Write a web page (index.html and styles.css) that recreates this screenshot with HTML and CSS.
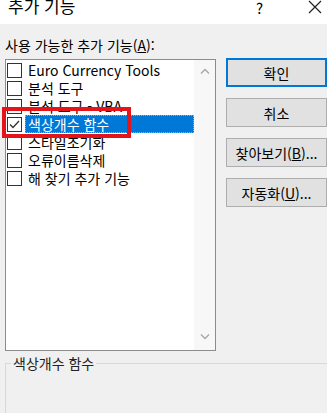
FILE: index.html
```html
<!DOCTYPE html>
<html lang="ko">
<head>
    <meta charset="UTF-8">
    <meta name="viewport" content="width=device-width, initial-scale=1.0">
    <link rel="stylesheet" href="styles.css">
</head>
<body>
    <div class="titlebar">
        <span class="title">추가 기능</span>
        <span class="help">?</span>
        <svg class="close" width="14" height="14" viewBox="0 0 14 14">
            <path d="M1 1 L13 13 M13 1 L1 13" stroke="#222" stroke-width="1.2" fill="none"/>
        </svg>
    </div>

    <div class="content">
        <div class="left">
            <div class="caption">사용 가능한 추가 기능(<u>A</u>):</div>
            <div class="listbox">
                <ul class="items">
                    <li><span class="check"></span><span class="text">Euro Currency Tools</span></li>
                    <li><span class="check"></span><span class="text">분석 도구</span></li>
                    <li><span class="check"></span><span class="text">분석 도구 - VBA</span></li>
                    <li class="selected">
                        <span class="check">
                            <svg width="13" height="13" viewBox="0 0 13 13">
                                <path d="M2 6.5 L5 9.5 L11 3" stroke="#333" stroke-width="1.3" fill="none"/>
                            </svg>
                        </span>
                        <span class="text">색상개수 함수</span>
                    </li>
                    <li><span class="check"></span><span class="text">스타일초기화</span></li>
                    <li><span class="check"></span><span class="text">오류이름삭제</span></li>
                    <li><span class="check"></span><span class="text">해 찾기 추가 기능</span></li>
                </ul>
                <div class="scroll">
                    <svg width="10" height="7" viewBox="0 0 10 7">
                        <path d="M1 5.5 L5 1.5 L9 5.5" stroke="#a6a6a6" stroke-width="1.3" fill="none"/>
                    </svg>
                    <svg width="10" height="7" viewBox="0 0 10 7">
                        <path d="M1 1.5 L5 5.5 L9 1.5" stroke="#a6a6a6" stroke-width="1.3" fill="none"/>
                    </svg>
                </div>
            </div>
        </div>

        <div class="buttons">
            <button class="default">확인</button>
            <button>취소</button>
            <button>찾아보기(<u>B</u>)...</button>
            <button>자동화(<u>U</u>)...</button>
        </div>
    </div>

    <fieldset class="desc">
        <legend>색상개수 함수</legend>
    </fieldset>

    <!-- highlight annotation over the checked item -->
    <div class="mark"></div>
</body>
</html>
```

FILE: styles.css
```css
body {
    margin: 0;
    background-color: #f0f0f0;
    font-family: "Noto Sans CJK KR", "Noto Sans", sans-serif;
    font-size: 14px;
    color: #000;
    overflow: hidden;
    height: 413px;
    position: relative;
}

.titlebar {
    height: 24px;
    background-color: #fff;
    display: flex;
    align-items: flex-start;
    overflow: hidden;
}

.title {
    font-size: 17px;
    line-height: 17px;
    margin: -3px 0 0 8px;
    flex: 1;
}

.help {
    font-size: 15px;
    line-height: 15px;
    margin-top: 0;
    width: 14px;
}

.close {
    margin: 0 5px 0 38px;
}

.content {
    display: flex;
    padding-left: 5px;
}

.left {
    padding-top: 11px;
}

.caption {
    line-height: 20px;
    margin-bottom: 4px;
}

.listbox {
    width: 209px;
    height: 290px;
    border: 1px solid #8c8c8c;
    background-color: #fff;
    display: flex;
}

.items {
    list-style: none;
    margin: 0;
    padding: 1px 0 0 0;
    flex: 1;
}

.items li {
    height: 18px;
    display: flex;
    align-items: center;
}

.check {
    width: 13px;
    height: 13px;
    border: 1px solid #333;
    margin-left: 1px;
    background-color: #fff;
    flex: none;
}

.check svg {
    display: block;
}

.text {
    margin-left: 3px;
    padding: 0 3px;
    line-height: 17px;
    white-space: nowrap;
}

.selected .text {
    flex: 1;
    background-color: #0078d7;
    color: #fff;
    border: 1px dotted #e8a040;
    line-height: 16px;
    padding: 0 2px;
}

.scroll {
    width: 21px;
    background-color: #f7f7f7;
    display: flex;
    flex-direction: column;
    justify-content: space-between;
    align-items: center;
    padding: 8px 0 10px 0;
    box-sizing: border-box;
}

.scroll svg {
    display: block;
}

.buttons {
    display: flex;
    flex-direction: column;
    gap: 11px;
    padding-top: 34px;
    margin-left: 10px;
}

button {
    width: 101px;
    height: 29px;
    background-color: #e1e1e1;
    border: 1px solid #adadad;
    font-family: inherit;
    font-size: 14px;
    color: #000;
    padding: 0;
}

button.default {
    border: 2px solid #0078d7;
}

.desc {
    margin: 3px 0 0 5px;
    padding: 0;
    height: 60px;
    border: none;
    border-top: 1px solid #d8d8d8;
    border-left: 1px solid #d8d8d8;
}

.desc legend {
    margin-left: 5px;
    padding: 0 2px;
    line-height: 18px;
    color: #222;
}

.mark {
    position: absolute;
    left: 2px;
    top: 107px;
    width: 121px;
    height: 23px;
    border: 4px solid #e5141b;
}
```
